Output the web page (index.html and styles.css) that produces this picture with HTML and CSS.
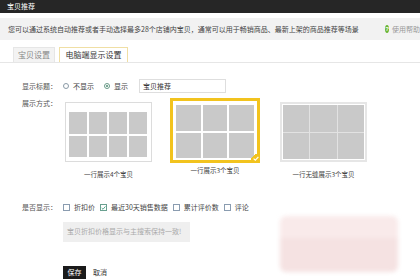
FILE: index.html
```html
<!DOCTYPE html>
<html lang="zh-CN">
<head>
    <meta charset="UTF-8">
    <title>宝贝推荐</title>
    <link rel="stylesheet" href="styles.css">
</head>
<body>
    <div class="hd">宝贝推荐</div>

    <div class="notice">
        <span>您可以通过系统自动推荐或者手动选择最多28个店铺内宝贝，通常可以用于畅销商品、最新上架的商品推荐等场景</span>
        <span class="help"><i class="q">?</i>使用帮助</span>
    </div>

    <div class="tabs">
        <span class="tab">宝贝设置</span>
        <span class="tab on">电脑端显示设置</span>
    </div>

    <div class="form">
        <div class="row r-title">
            <span class="lbl">显示标题：</span>
            <span class="radio"></span><span class="txt">不显示</span>
            <span class="radio checked"></span><span class="txt">显示</span>
            <span class="input">宝贝推荐</span>
        </div>

        <div class="row r-layout">
            <span class="lbl">展示方式：</span>
            <div class="opts">
                <div class="opt o1">
                    <div class="thumb">
                        <div class="cells c4">
                            <i></i><i></i><i></i><i></i><i></i><i></i><i></i><i></i>
                        </div>
                    </div>
                    <div class="cap">一行展示4个宝贝</div>
                </div>
                <div class="opt o2">
                    <div class="thumb sel">
                        <div class="cells c3">
                            <i></i><i></i><i></i><i></i><i></i><i></i>
                        </div>
                        <span class="badge">
                            <svg width="6" height="5" viewBox="0 0 6 5"><path d="M0.6 2.6 L2.3 4.1 L5.4 0.8" fill="none" stroke="#fff" stroke-width="1.2"/></svg>
                        </span>
                    </div>
                    <div class="cap">一行展示3个宝贝</div>
                </div>
                <div class="opt o3">
                    <div class="thumb">
                        <div class="cells c3 seamless">
                            <i></i><i></i><i></i><i></i><i></i><i></i>
                        </div>
                    </div>
                    <div class="cap">一行无缝展示3个宝贝</div>
                </div>
            </div>
        </div>

        <div class="row r-show">
            <span class="lbl">是否显示：</span>
            <span class="cb"></span><span class="txt">折扣价</span>
            <span class="cb checked">
                <svg width="7" height="6" viewBox="0 0 7 6"><path d="M1 3 L2.8 4.8 L6.2 0.8" fill="none" stroke="#3a9a7a" stroke-width="1.2"/></svg>
            </span><span class="txt">最近30天销售数据</span>
            <span class="cb"></span><span class="txt">累计评价数</span>
            <span class="cb"></span><span class="txt">评论</span>
        </div>

        <div class="note">宝贝折扣价格显示与主搜索保持一致!</div>

        <div class="btns">
            <span class="btn-save">保存</span>
            <span class="btn-cancel">取消</span>
        </div>
    </div>

    <div class="smudge"></div>
</body>
</html>
```

FILE: styles.css
```css
body {
    margin: 0;
    width: 420px;
    height: 280px;
    overflow: hidden;
    position: relative;
    background: #fff;
    color: #444;
    font-family: "Noto Sans CJK SC", "Liberation Sans", sans-serif;
    font-size: 7px;
    line-height: 1;
}

.hd {
    height: 13px;
    background: #262626;
    color: #fff;
    padding-left: 7px;
    display: flex;
    align-items: center;
    font-size: 7px;
}

.notice {
    margin-top: 5px;
    height: 22px;
    background: #f2f2f2;
    display: flex;
    align-items: center;
    justify-content: space-between;
    padding-left: 8px;
    white-space: nowrap;
    overflow: hidden;
    color: #444;
}

.help {
    display: flex;
    align-items: center;
    gap: 3px;
    color: #999;
    width: 35px;
    flex: none;
}

.q {
    width: 8px;
    height: 8px;
    border-radius: 50%;
    background: #6ab534;
    color: #fff;
    font-style: normal;
    font-size: 6px;
    display: flex;
    align-items: center;
    justify-content: center;
    font-family: "Liberation Sans", sans-serif;
    font-weight: bold;
}

.tabs {
    margin-top: 7px;
    padding-left: 13px;
    display: flex;
    gap: 4px;
    border-bottom: 1px solid #e6e6e6;
    height: 15px;
}

.tab {
    width: 42px;
    height: 15px;
    box-sizing: border-box;
    display: flex;
    align-items: center;
    justify-content: center;
    background: #f3f3f3;
    border: 1px solid #e6e6e6;
    border-bottom: none;
    color: #888;
    font-size: 8px;
}

.tab.on {
    width: 69px;
    background: #fff;
    border-color: #f0dfa4;
    color: #333;
}

.form {
    padding-left: 22px;
}

.row {
    display: flex;
    align-items: center;
}

.lbl {
    width: 41px;
    flex: none;
    color: #555;
}

.txt {
    margin-left: 4px;
    margin-right: 5px;
    color: #444;
}

.r-title {
    margin-top: 16px;
    height: 14px;
}

.radio {
    width: 6px;
    height: 6px;
    border: 1px solid #8a9aa6;
    border-radius: 50%;
    box-sizing: border-box;
    position: relative;
}

.radio.checked {
    margin-left: 5px;
    border-color: #6a9a88;
}

.radio.checked::after {
    content: "";
    position: absolute;
    left: 1px;
    top: 1px;
    width: 2px;
    height: 2px;
    border-radius: 50%;
    background: #4a8a70;
}

.input {
    margin-left: 6px;
    width: 87px;
    height: 14px;
    box-sizing: border-box;
    border: 1px solid #dedede;
    display: flex;
    align-items: center;
    padding-left: 3px;
    color: #333;
}

.r-layout {
    margin-top: 5px;
    align-items: flex-start;
}

.r-layout .lbl {
    margin-top: 2px;
}

.opts {
    display: flex;
    align-items: flex-start;
    margin-left: 2px;
}

.opt {
    display: flex;
    flex-direction: column;
    align-items: center;
}

.o2 {
    margin-left: 18px;
}

.o3 {
    margin-left: 20px;
}

.thumb {
    box-sizing: border-box;
    background: #fff;
    position: relative;
}

.o1 .thumb {
    width: 87px;
    height: 60px;
    margin-top: 4px;
    margin-bottom: 5px;
    border: 1px solid #dcdcdc;
    padding: 9px 4px 4px 3px;
}

.thumb.sel {
    width: 90px;
    height: 65px;
    border: 3px solid #f2c31e;
    padding: 4px 3px 2px 3px;
}

.o3 .thumb {
    width: 87px;
    height: 60px;
    margin-top: 4px;
    margin-bottom: 5px;
    border: 2px solid #e6e6e6;
    padding: 1px;
}

.cells {
    display: grid;
    height: 100%;
    gap: 2px;
    grid-template-rows: 1fr 1fr;
}

.cells.c4 {
    grid-template-columns: repeat(4, 1fr);
}

.cells.c3 {
    grid-template-columns: repeat(3, 1fr);
}

.cells.seamless {
    gap: 1px;
    background: #e2e2e2;
}

.cells i {
    background: #c9c9c9;
}

.badge {
    position: absolute;
    right: -3px;
    bottom: -3px;
    width: 13px;
    height: 13px;
    background: linear-gradient(135deg, transparent 50%, #f2c31e 50%);
    display: flex;
    align-items: flex-end;
    justify-content: flex-end;
    padding: 0 1px 2px 0;
    box-sizing: border-box;
}

.cap {
    margin-top: 4px;
    color: #444;
    font-size: 6.5px;
}

.r-show {
    margin-top: 25px;
    height: 10px;
}

.cb {
    width: 7px;
    height: 7px;
    box-sizing: border-box;
    border: 1px solid #8a9cb0;
    display: flex;
    align-items: center;
    justify-content: center;
}

.cb.checked {
    border-color: #6aa090;
}

.note {
    margin-left: 41px;
    margin-top: 9px;
    width: 127px;
    height: 20px;
    background: #efefef;
    color: #aaa;
    display: flex;
    align-items: center;
    padding-left: 4px;
    box-sizing: border-box;
}

.btns {
    margin-left: 41px;
    margin-top: 24px;
    display: flex;
    align-items: center;
    gap: 7px;
}

.btn-save {
    width: 23px;
    height: 13px;
    background: #1a1a1a;
    color: #fff;
    display: flex;
    align-items: center;
    justify-content: center;
}

.btn-cancel {
    color: #333;
}

.smudge {
    position: absolute;
    left: 280px;
    top: 216px;
    width: 118px;
    height: 56px;
    background: linear-gradient(#f9eaea 40%, #f5e2e2 40%);
    filter: blur(2px);
    border-radius: 6px;
}
```
